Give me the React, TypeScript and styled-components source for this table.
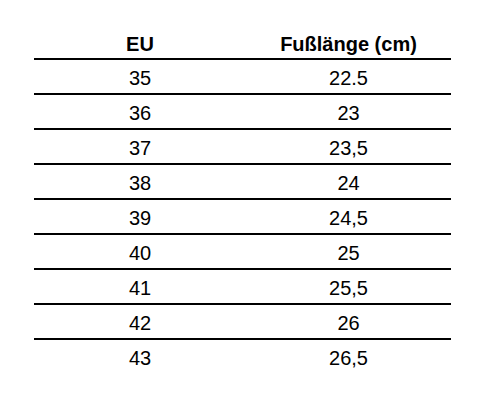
import React from "react";
import styled, { createGlobalStyle } from "styled-components";

const Global = createGlobalStyle`
  html, body { margin: 0; padding: 0; background: #ffffff; }
  body { font-family: "Liberation Sans", Arial, sans-serif; color: #000; }
`;

const Page = styled.div`
  width: 486px;
  height: 415px;
  padding: 25px 0 0 34px;
  box-sizing: border-box;
`;

const Table = styled.div`
  width: 417px;
  display: flex;
  flex-direction: column;
`;

const Row = styled.div<{ $last?: boolean }>`
  display: grid;
  grid-template-columns: 212px 205px;
  height: 33px;
  border-bottom: ${(p) => (p.$last ? "none" : "2px solid #000")};
`;

const Cell = styled.div<{ $head?: boolean }>`
  display: flex;
  align-items: center;
  justify-content: center;
  font-size: 20px;
  line-height: 20px;
  font-weight: ${(p) => (p.$head ? 700 : 400)};
  padding-top: ${(p) => (p.$head ? "4px" : "2px")};
`;

const rows: [string, string][] = [
  ["35", "22.5"],
  ["36", "23"],
  ["37", "23,5"],
  ["38", "24"],
  ["39", "24,5"],
  ["40", "25"],
  ["41", "25,5"],
  ["42", "26"],
  ["43", "26,5"],
];

export default function App() {
  return (
    <>
      <Global />
      <Page>
        <Table>
          <Row>
            <Cell $head>EU</Cell>
            <Cell $head>Fußlänge (cm)</Cell>
          </Row>
          {rows.map(([eu, cm], i) => (
            <Row key={eu} $last={i === rows.length - 1}>
              <Cell>{eu}</Cell>
              <Cell>{cm}</Cell>
            </Row>
          ))}
        </Table>
      </Page>
    </>
  );
}
